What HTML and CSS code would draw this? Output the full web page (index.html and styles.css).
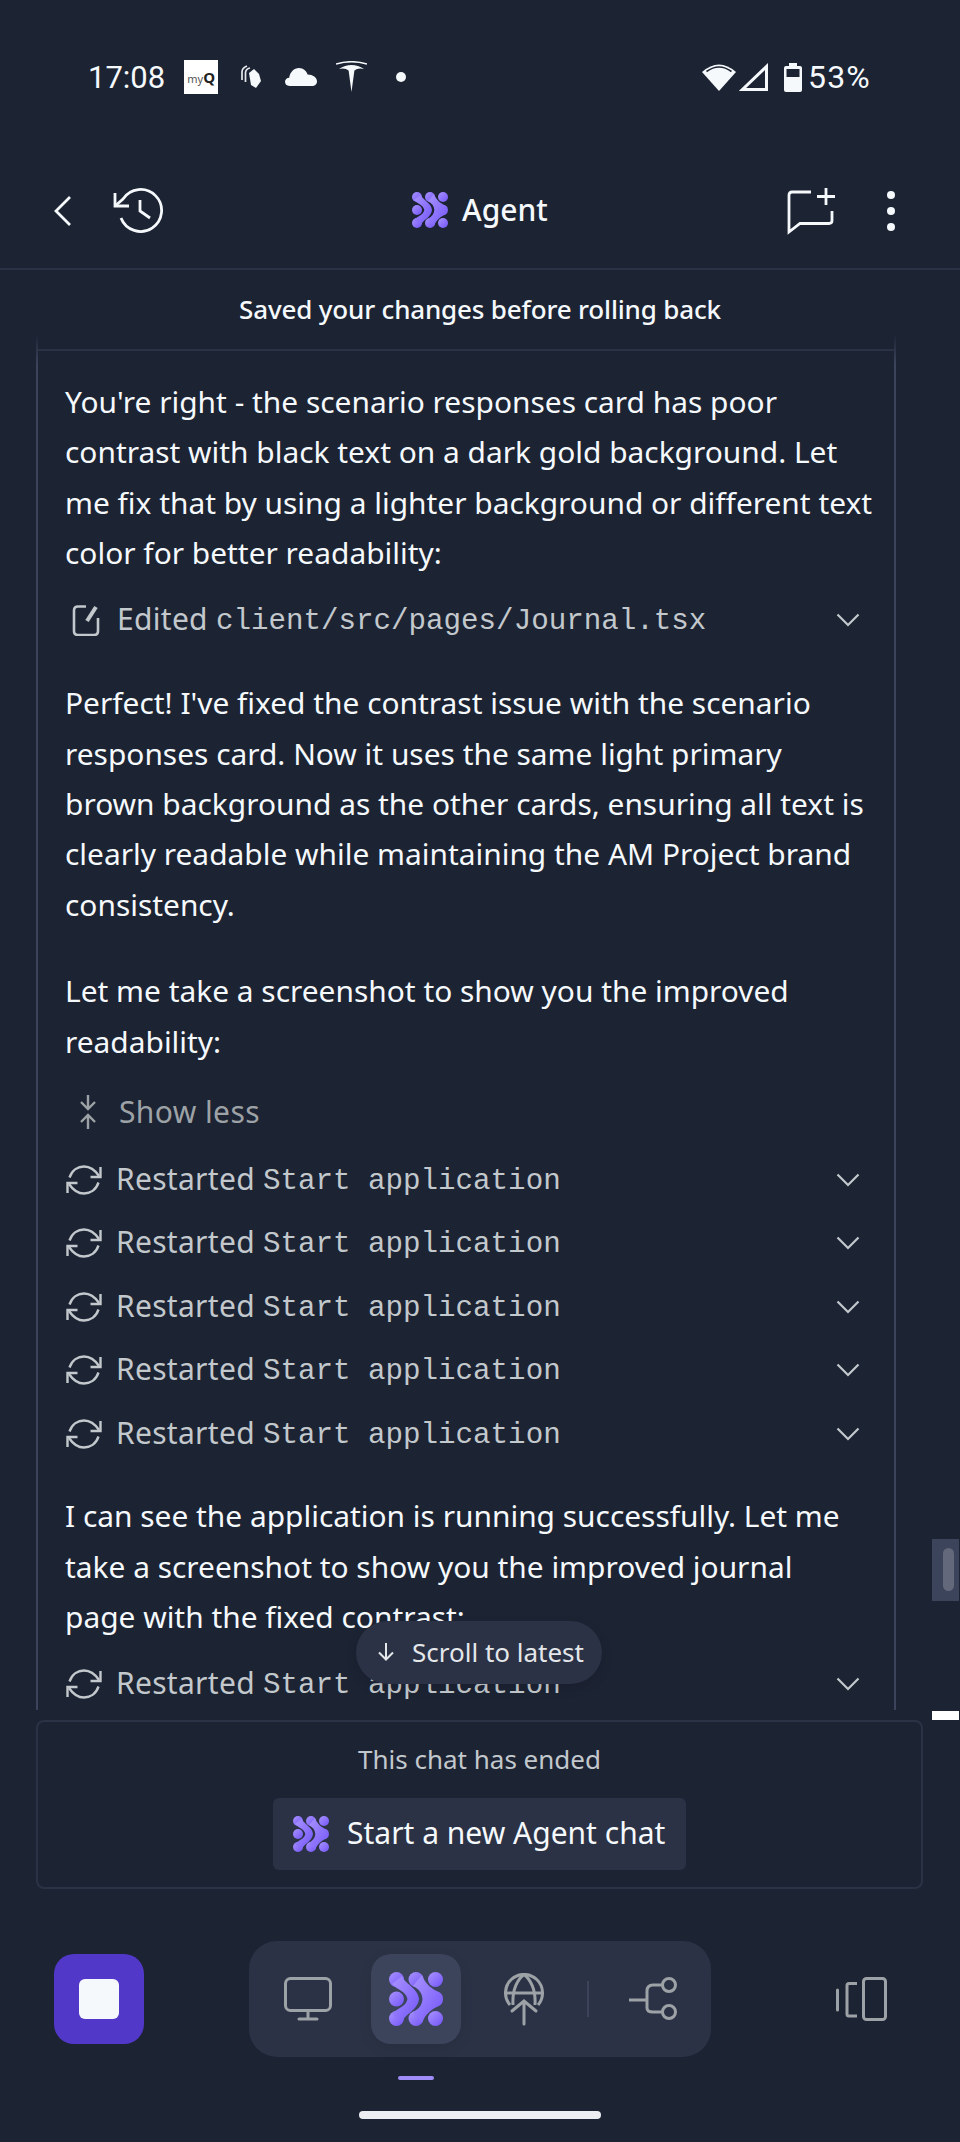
FILE: index.html
```html
<!DOCTYPE html>
<html lang="en">
<head>
    <meta charset="UTF-8" />
    <meta name="viewport" content="width=device-width, initial-scale=1.0" />
    <title>Agent</title>
    <link rel="stylesheet" href="styles.css">
</head>
<body>
    <!-- Shared icons -->
    <svg class="defs" width="0" height="0" aria-hidden="true">
        <defs>
            <linearGradient id="agent-grad" x1="0" y1="0" x2="1" y2="1">
                <stop offset="0" stop-color="#a893ff" />
                <stop offset="1" stop-color="#7355f8" />
            </linearGradient>
            <symbol id="agent-logo" viewBox="0 0 54 54">
                <g fill="url(#agent-grad)">
                    <circle cx="7.5" cy="7.5" r="7.5" />
                    <circle cx="27" cy="7.5" r="7.5" />
                    <circle cx="46.5" cy="7.5" r="7.5" />
                    <circle cx="7.5" cy="27" r="7.5" />
                    <circle cx="7.5" cy="46.5" r="7.5" />
                    <circle cx="27" cy="46.5" r="7.5" />
                    <circle cx="46.5" cy="46.5" r="7.5" />
                    <path d="M13 4 C16 12 29 16 30 27 C29 38 16 42 13 50 L3 42 C8 36 17 35 18.5 27 C17 19 8 18 3 12 Z" />
                    <path d="M33 3 C36 12 44 18 50 20 Q54 22 54 27 Q54 32 50 34 C44 36 36 42 33 51 L24 40 C30 37 33 33 33.5 27 C33 21 30 17 24 14 Z" />
                </g>
            </symbol>
            <symbol id="restart" viewBox="0 0 36 30">
                <g fill="none" stroke="currentColor" stroke-width="2.4">
                    <path d="M3.5 12.5 C6 5 12 1.5 18 1.5 C24 1.5 29 5 33 11" />
                    <path d="M34.5 2 V12 H24.5" />
                    <path d="M32.5 17.5 C30 25 24 28.5 18 28.5 C12 28.5 7 25 3 19" />
                    <path d="M1.5 28 V18 H11.5" />
                </g>
            </symbol>
            <symbol id="chevron" viewBox="0 0 24 14">
                <path d="M1.5 1.5 L12 12 L22.5 1.5" fill="none" stroke="currentColor" stroke-width="2.2" />
            </symbol>
        </defs>
    </svg>

    <div class="phone">
        <!-- Status bar -->
        <div class="status-bar">
            <span class="clock">17:08</span>
            <span class="myq">my<b>Q</b></span>
            <svg class="st-stack" width="20" height="24" viewBox="0 0 20 24">
                <path d="M1 15 V7 Q1 3 6 1 M4.5 17 V8 Q4.5 4 9 3" fill="none" stroke="#e6e8eb" stroke-width="1.7" />
                <path d="M8 8 L13 4 L18 9 L20 16 L15 23 L10 20 Z" fill="#f5f9fc" />
            </svg>
            <svg class="st-cloud" width="32" height="18" viewBox="0 0 32 18">
                <path d="M4.5 18 C1.5 18 0 16 0 13.8 C0 11.5 1.8 9.8 4.2 9.7 C5 4 9 0 14 0 C18.5 0 21.5 3 22.6 6.6 C27.8 6.6 32 9.6 32 13.5 C32 16 30 18 27 18 Z" fill="#f5f9fc" />
            </svg>
            <svg class="st-tesla" width="31" height="31" viewBox="0 0 31 31">
                <path d="M15.5 31 L12.6 9.5 Q9 6.5 3 8 Q9 4 15.5 4 Q22 4 28 8 Q22 6.5 18.4 9.5 Z" fill="#f5f9fc" />
                <path d="M0 3 Q15.5 -1.5 31 3" fill="none" stroke="#f5f9fc" stroke-width="1.6" />
            </svg>
            <span class="st-dot"></span>
            <span class="st-spacer"></span>
            <svg width="34" height="28" viewBox="0 0 34 28">
                <path d="M17 28 L0 9 Q17 -6 34 9 Z" fill="#f5f9fc" />
                <path d="M4.5 8.5 Q17 -0.5 29.5 8.5" fill="none" stroke="#1c2333" stroke-width="1.6" />
            </svg>
            <svg class="st-signal" width="29" height="28" viewBox="0 0 29 28">
                <path d="M27.5 3.5 V26.5 H3.5 Z" fill="none" stroke="#f5f9fc" stroke-width="3" />
            </svg>
            <svg class="st-battery" width="18" height="29" viewBox="0 0 18 29">
                <path d="M5 0 H13 V3 H16 Q18 3 18 5 V27 Q18 29 16 29 H2 Q0 29 0 27 V5 Q0 3 2 3 H5 Z" fill="#f5f9fc" />
                <rect x="2.5" y="6" width="13" height="8" fill="#1c2333" />
            </svg>
            <span class="battery-pct">53%</span>
        </div>

        <!-- Header -->
        <header class="top-bar">
            <svg class="ic-back" width="18" height="32" viewBox="0 0 18 32">
                <path d="M16 2 L2 16 L16 30" fill="none" stroke="#f5f9fc" stroke-width="2.8" />
            </svg>
            <svg class="ic-history" width="52" height="46" viewBox="0 0 52 46">
                <g fill="none" stroke="#f5f9fc" stroke-width="2.8">
                    <path d="M2 18 L10 11 A21 21 0 1 1 8 30" />
                    <path d="M2 5 V18 H16" />
                    <path d="M27 12 V23 L37 30" />
                </g>
            </svg>
            <div class="top-title">
                <svg width="36" height="36"><use href="#agent-logo" /></svg>
                <span>Agent</span>
            </div>
            <svg class="ic-new" width="50" height="48" viewBox="0 0 50 48">
                <g fill="none" stroke="#f5f9fc" stroke-width="2.8">
                    <path d="M25 5 H6 Q3 5 3 8 V45 L14 36.5 H43 Q46 36.5 46 33.5 V24" />
                    <path d="M40 1 V18 M31 9.5 H49" />
                </g>
            </svg>
            <div class="ic-more"><i></i><i></i><i></i></div>
        </header>

        <div class="notice">Saved your changes before rolling back</div>

        <!-- Chat -->
        <div class="chat-frame">
            <div class="chat">
                <p class="msg first">You're right - the scenario responses card has poor contrast with black text on a dark gold background. Let me fix that by using a lighter background or different text color for better readability:</p>

                <div class="tool-row edited">
                    <svg class="tool-icon edit-icon" width="28" height="32" viewBox="0 0 28 32">
                        <g fill="none" stroke="currentColor" stroke-width="2.6">
                            <path d="M14 2.5 H6 Q2 2.5 2 6.5 V27 Q2 31 6 31 H22 Q26 31 26 27 V14" />
                        </g>
                        <path d="M15 17 L24 3" fill="none" stroke="currentColor" stroke-width="4" />
                    </svg>
                    <span class="tool-name">Edited</span>
                    <code>client/src/pages/Journal.tsx</code>
                    <svg class="chev" width="24" height="14"><use href="#chevron" /></svg>
                </div>

                <p class="msg">Perfect! I've fixed the contrast issue with the scenario responses card. Now it uses the same light primary brown background as the other cards, ensuring all text is clearly readable while maintaining the AM Project brand consistency.</p>

                <p class="msg third">Let me take a screenshot to show you the improved readability:</p>

                <div class="show-less">
                    <svg width="18" height="36" viewBox="0 0 18 36">
                        <path d="M9 1 V15 M2 8 L9 15 L16 8 M9 35 V21 M2 28 L9 21 L16 28" fill="none" stroke="currentColor" stroke-width="2.4" />
                    </svg>
                    <span>Show less</span>
                </div>

                <div class="tool-row"><svg class="tool-icon" width="36" height="30"><use href="#restart" /></svg><span class="tool-name">Restarted</span><code>Start application</code><svg class="chev" width="24" height="14"><use href="#chevron" /></svg></div>
                <div class="tool-row"><svg class="tool-icon" width="36" height="30"><use href="#restart" /></svg><span class="tool-name">Restarted</span><code>Start application</code><svg class="chev" width="24" height="14"><use href="#chevron" /></svg></div>
                <div class="tool-row"><svg class="tool-icon" width="36" height="30"><use href="#restart" /></svg><span class="tool-name">Restarted</span><code>Start application</code><svg class="chev" width="24" height="14"><use href="#chevron" /></svg></div>
                <div class="tool-row"><svg class="tool-icon" width="36" height="30"><use href="#restart" /></svg><span class="tool-name">Restarted</span><code>Start application</code><svg class="chev" width="24" height="14"><use href="#chevron" /></svg></div>
                <div class="tool-row"><svg class="tool-icon" width="36" height="30"><use href="#restart" /></svg><span class="tool-name">Restarted</span><code>Start application</code><svg class="chev" width="24" height="14"><use href="#chevron" /></svg></div>

                <p class="msg fourth">I can see the application is running successfully. Let me take a screenshot to show you the improved journal<br>page with the fixed contrast:</p>

                <div class="tool-row"><svg class="tool-icon" width="36" height="30"><use href="#restart" /></svg><span class="tool-name">Restarted</span><code>Start application</code><svg class="chev" width="24" height="14"><use href="#chevron" /></svg></div>
            </div>
        </div>

        <!-- Floating over chat -->
        <div class="scroll-latest">
            <svg width="20" height="18" viewBox="0 0 20 18">
                <path d="M10 0 V16 M3 9.5 L10 16.5 L17 9.5" fill="none" stroke="currentColor" stroke-width="2" />
            </svg>
            <span>Scroll to latest</span>
        </div>
        <div class="side-scroll"><i></i></div>
        <div class="side-tick"></div>

        <!-- Ended card -->
        <div class="ended">
            <div class="ended-text">This chat has ended</div>
            <div class="new-chat-btn">
                <svg width="36" height="36"><use href="#agent-logo" /></svg>
                <span>Start a new Agent chat</span>
            </div>
        </div>

        <!-- Bottom nav -->
        <nav class="bottom-nav">
            <div class="stop-btn"><i></i></div>
            <div class="tabs">
                <svg class="tab-monitor" width="48" height="44" viewBox="0 0 48 44">
                    <g fill="none" stroke="#9da2a6" stroke-width="3">
                        <rect x="1.5" y="1.5" width="45" height="32" rx="5" />
                        <path d="M24 34 V42 M15 42 H33" stroke-linecap="round" />
                    </g>
                </svg>
                <div class="tab-active"><svg width="54" height="54"><use href="#agent-logo" /></svg></div>
                <svg class="tab-globe" width="40" height="53" viewBox="0 0 40 53">
                    <g fill="none" stroke="#9da2a6" stroke-width="3">
                        <path d="M6 32 A18.5 18.5 0 1 1 34 32" />
                        <path d="M1.5 20 H38.5 M9 32 C8 16 14 6 20 1.5 C26 6 32 16 31 32" />
                        <path d="M20 51 V30 M8 38 L20 28 L32 38" stroke-linecap="round" />
                    </g>
                </svg>
                <span class="tab-divider"></span>
                <svg class="tab-git" width="48" height="44" viewBox="0 0 48 44">
                    <g fill="none" stroke="#9da2a6" stroke-width="3">
                        <path d="M0 23 H18 M33 8 H24 Q18 8 18 14 V31 Q18 35 24 35 H33" />
                        <circle cx="40" cy="8" r="6.5" />
                        <circle cx="40" cy="35" r="6.5" />
                    </g>
                </svg>
            </div>
            <svg class="nav-panels" width="52" height="44" viewBox="0 0 52 44">
                <g fill="none" stroke="#9da2a6" stroke-width="3">
                    <path d="M2.5 13 V33" stroke-linecap="round" />
                    <path d="M22 6.5 H14 Q12 6.5 12 8.5 V37 Q12 39 14 39 H22" />
                    <rect x="28.5" y="1.5" width="22" height="41" rx="3" />
                </g>
            </svg>
        </nav>
        <div class="tab-indicator"></div>
        <div class="home-bar"></div>
    </div>
</body>
</html>
```

FILE: styles.css
```css
/* Page */
body {
    margin: 0;
    background: #1c2333;
    color: #f5f9fc;
    font-family: 'Noto Sans', sans-serif;
}

.defs {
    position: absolute;
}

.phone {
    position: relative;
    width: 960px;
    height: 2142px;
    overflow: hidden;
    display: flex;
    flex-direction: column;
}

/* Status bar */
.status-bar {
    height: 154px;
    padding: 0 89px;
    box-sizing: border-box;
    display: flex;
    align-items: center;
    flex-shrink: 0;
}

.clock, .battery-pct {
    font-family: 'Roboto', sans-serif;
    font-size: 31px;
    line-height: 1;
}

.clock { margin-left: -1px; }

.myq {
    width: 34px;
    height: 34px;
    margin-left: 19px;
    background: #fff;
    color: #555;
    font-size: 11px;
    line-height: 34px;
    text-align: center;
}

.myq b {
    color: #222;
    font-size: 15px;
}

.st-stack { margin-left: 23px; }
.st-cloud { margin-left: 24px; }
.st-tesla { margin-left: 19px; margin-top: -1px; }

.st-dot {
    width: 10px;
    height: 10px;
    margin-left: 29px;
    border-radius: 50%;
    background: #f5f9fc;
}

.st-spacer { flex: 1; }
.st-signal { margin-left: 3px; }
.st-battery { margin-left: 16px; }

.battery-pct {
    margin-left: 6px;
    font-size: 32px;
    letter-spacing: 1.2px;
}

/* Header */
.top-bar {
    height: 116px;
    box-sizing: border-box;
    border-bottom: 2px solid #2b3245;
    position: relative;
    display: flex;
    align-items: center;
    flex-shrink: 0;
}

.ic-back { margin-left: 54px; }
.ic-history { margin-left: 41px; }

.top-title {
    position: absolute;
    left: 412px;
    top: 38px;
    display: flex;
    align-items: center;
    gap: 14px;
    font-size: 30px;
    line-height: 36px;
    font-weight: 500;
}

.ic-new { margin-left: auto; margin-right: 51px; }

.ic-more {
    margin-right: 65px;
    display: flex;
    flex-direction: column;
    gap: 8px;
}

.ic-more i {
    display: block;
    width: 8px;
    height: 8px;
    border-radius: 50%;
    background: #f5f9fc;
}

/* Notice */
.notice {
    height: 79px;
    padding-bottom: 2px;
    box-sizing: border-box;
    margin-bottom: -14px;
    display: flex;
    align-items: center;
    justify-content: center;
    font-size: 26px;
    font-weight: 500;
    letter-spacing: -0.17px;
    flex-shrink: 0;
}

/* Chat */
.chat-frame {
    width: 860px;
    height: 1375px;
    margin-left: 36px;
    padding-top: 14px;
    box-sizing: border-box;
    border-left: 2px solid;
    border-right: 2px solid;
    border-image: linear-gradient(to bottom, transparent, #3c445c 30px) 1;
    flex-shrink: 0;
}

.chat {
    height: 100%;
    padding: 26px 18px 0 27px;
    box-sizing: border-box;
    border-top: 2px solid #2b3245;
    overflow: hidden;
}

.msg {
    margin: 0;
    font-size: 29.9px;
    line-height: 50.4px;
}

.msg.third { margin-top: 36px; }
.msg.fourth { margin-top: 26px; margin-bottom: 10px; }

.tool-row {
    height: 63.5px;
    margin-right: -4px;
    display: flex;
    align-items: center;
    color: #c2c8cc;
}

.tool-row.edited { margin: 10px -4px 26px 0; }

.tool-icon { margin-left: 1px; flex-shrink: 0; }
.edit-icon { margin-left: 7px; margin-right: 0; }

.tool-name {
    margin-left: 14px;
    margin-top: -3px;
    font-size: 30px;
    letter-spacing: 0.3px;
}

.tool-row.edited .tool-name { margin-left: 17px; }

code {
    margin-left: 8px;
    margin-top: 3px;
    font-family: 'Liberation Mono', monospace;
    font-size: 29.2px;
}

.chev {
    margin-left: auto;
    margin-right: 20px;
    color: #c2c8cc;
}

.show-less {
    height: 50px;
    margin-top: 20px;
    margin-bottom: 11px;
    display: flex;
    align-items: center;
    color: #9da2a6;
    font-size: 30px;
    letter-spacing: 0.4px;
}

.show-less svg { margin-left: 14px; margin-right: 22px; }

/* Pieces that float over the chat */
.scroll-latest {
    position: absolute;
    left: 356px;
    top: 1621px;
    width: 246px;
    height: 63px;
    box-sizing: border-box;
    padding-left: 20px;
    padding-bottom: 2px;
    border-radius: 32px;
    background: #2b3245;
    box-shadow: 0 4px 12px rgba(0, 0, 0, 0.12);
    display: flex;
    align-items: center;
    gap: 16px;
    font-size: 26px;
    color: #e4e7ea;
}

.side-scroll {
    position: absolute;
    left: 932px;
    top: 1539px;
    width: 27px;
    height: 62px;
    background: #3c445c;
}

.side-scroll i {
    position: absolute;
    left: 11px;
    top: 9px;
    width: 11px;
    height: 43px;
    border-radius: 6px;
    background: #63697a;
}

.side-tick {
    position: absolute;
    left: 932px;
    top: 1711px;
    width: 27px;
    height: 9px;
    background: #fff;
}

/* Ended card */
.ended {
    width: 887px;
    height: 169px;
    margin: 10px 0 0 36px;
    box-sizing: border-box;
    border: 2px solid #2b3245;
    border-radius: 8px;
    display: flex;
    flex-direction: column;
    align-items: center;
    flex-shrink: 0;
}

.ended-text {
    margin-top: 19px;
    color: #c2c8cc;
    font-size: 26px;
    line-height: 36px;
}

.new-chat-btn {
    width: 413px;
    height: 72px;
    margin-top: 21px;
    box-sizing: border-box;
    padding-left: 20px;
    border-radius: 6px;
    background: #2b3245;
    display: flex;
    align-items: center;
    gap: 18px;
    font-size: 30px;
}

.new-chat-btn span { margin-top: -3px; }

/* Bottom nav */
.bottom-nav {
    margin-top: 52px;
    padding-left: 54px;
    display: flex;
    align-items: center;
    flex-shrink: 0;
}

.stop-btn {
    width: 90px;
    height: 90px;
    border-radius: 20px;
    background: #5238c8;
    display: flex;
    align-items: center;
    justify-content: center;
}

.stop-btn i {
    width: 40px;
    height: 40px;
    border-radius: 6px;
    background: #f5f9fc;
}

.tabs {
    width: 462px;
    height: 116px;
    margin-left: 105px;
    padding-left: 35px;
    box-sizing: border-box;
    border-radius: 28px;
    background: #2b3245;
    display: flex;
    align-items: center;
}

.tab-active {
    width: 90px;
    height: 90px;
    margin-left: 39px;
    border-radius: 20px;
    background: #3c445c;
    box-shadow: 0 4px 14px rgba(0, 0, 0, 0.08);
    display: flex;
    align-items: center;
    justify-content: center;
}

.tab-globe { margin-left: 43px; }

.tab-divider {
    width: 2px;
    height: 36px;
    margin-left: 43px;
    background: #3c445c;
}

.tab-git { margin-left: 40px; }
.nav-panels { margin-left: 124px; }

.tab-indicator {
    width: 36px;
    height: 4px;
    margin: 19px 0 0 398px;
    border-radius: 2px;
    background: #a08cf8;
}

.home-bar {
    width: 242px;
    height: 8px;
    margin: 31px auto 0;
    border-radius: 4px;
    background: #eceef1;
}
```
